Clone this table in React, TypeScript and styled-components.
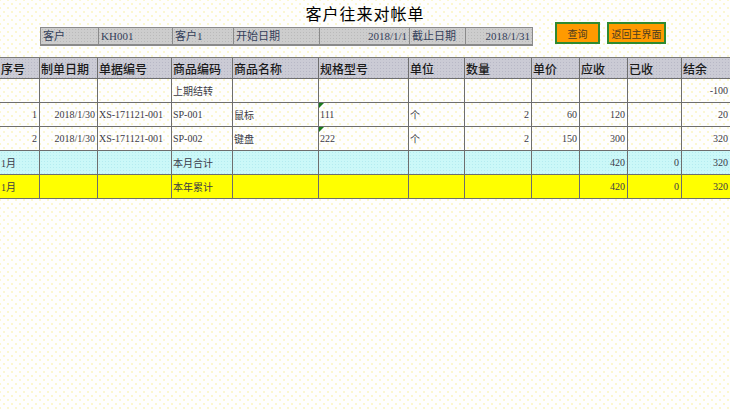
import React from "react";
import styled, { createGlobalStyle } from "styled-components";

const Global = createGlobalStyle`
  html, body { margin: 0; padding: 0; }
  body {
    width: 730px;
    height: 410px;
    overflow: hidden;
    background-color: #fefefe;
    background-image:
      radial-gradient(circle, #f7ec7e 0.45px, transparent 0.85px),
      radial-gradient(circle, #f7ec7e 0.45px, transparent 0.85px);
    background-size: 8px 8px;
    background-position: 0 0, 4px 4px;
    font-family: "Liberation Serif", "Noto Sans CJK SC", serif;
  }
`;

const COLS = "40px 58px 74px 61px 86px 90px 56px 67px 48px 48px 54px 48px";

const Page = styled.div`
  width: 730px;
  display: flex;
  flex-direction: column;
`;

const Title = styled.h1`
  margin: 0;
  height: 23px;
  padding-top: 3px;
  text-align: center;
  font-size: 16px;
  font-weight: 400;
  line-height: 20px;
  color: #000;
  letter-spacing: 1px;
  font-family: "Noto Sans CJK SC", sans-serif;
`;

const TopBar = styled.div`
  display: flex;
  align-items: flex-start;
  padding-left: 40px;
  height: 31px;
`;

const InfoGrid = styled.div`
  margin-top: 1px;
  display: grid;
  grid-template-columns: 58px 74px 61px 86px 90px 56px 67px;
  height: 19px;
  border-top: 1px solid #8a8a8a;
  border-bottom: 2px solid #8a8a8a;
  border-left: 1px solid #8a8a8a;
  box-sizing: border-box;
  background-color: #cdcdcd;
  background-image: radial-gradient(circle, #bababa 0.5px, transparent 0.9px);
  background-size: 3px 3px;
`;

const InfoCell = styled.div<{ $right?: boolean }>`
  border-right: 1px solid #8a8a8a;
  font-size: 11px;
  line-height: 16px;
  color: #34405a;
  padding: 0 2px;
  white-space: nowrap;
  overflow: hidden;
  text-align: ${(p) => (p.$right ? "right" : "left")};
  font-family: "Liberation Serif", "Noto Sans CJK SC", serif;
`;

const Buttons = styled.div`
  display: flex;
  gap: 7px;
  margin-left: 22px;
  margin-top: -4px;
`;

const Btn = styled.button<{ $w: number }>`
  width: ${(p) => p.$w}px;
  height: 22px;
  box-sizing: border-box;
  background: #ff9a00;
  border: 2px solid #2f8a2f;
  border-radius: 0;
  padding: 0;
  font-size: 10px;
  color: #4a3a20;
  font-family: "Noto Sans CJK SC", sans-serif;
  cursor: pointer;
`;

const Table = styled.div`
  display: grid;
  grid-template-columns: ${COLS};
  border-top: 1px solid #7a7a7a;
`;

type RowKind = "head" | "plain" | "month" | "year";

const rowBg: Record<RowKind, string> = {
  head: "#cbcbd5",
  plain: "transparent",
  month: "#cbf8f8",
  year: "#ffff00",
};

const Cell = styled.div<{ $kind: RowKind; $right?: boolean }>`
  position: relative;
  height: ${(p) => (p.$kind === "head" ? "20px" : "23px")};
  border-right: 1px solid #6e6e6e;
  border-bottom: 1px solid #6e6e6e;
  background-color: ${(p) => rowBg[p.$kind]};
  background-image: ${(p) =>
    p.$kind === "head"
      ? "radial-gradient(circle, #b8b8c6 0.5px, transparent 0.9px)"
      : p.$kind === "month"
      ? "radial-gradient(circle, #b4ecf0 0.5px, transparent 0.9px)"
      : "none"};
  background-size: 3px 3px;
  box-sizing: content-box;
  padding: 0 2px 0 1px;
  display: flex;
  align-items: center;
  justify-content: ${(p) => (p.$right ? "flex-end" : "flex-start")};
  font-size: ${(p) => (p.$kind === "head" ? "12px" : "10px")};
  font-weight: ${(p) => (p.$kind === "head" ? 500 : 400)};
  color: ${(p) => (p.$kind === "head" ? "#1a1a1a" : "#3a3a48")};
  white-space: nowrap;
  overflow: hidden;
  font-family: ${(p) =>
    p.$kind === "head"
      ? `"Noto Sans CJK SC", sans-serif`
      : `"Liberation Serif", "Noto Sans CJK SC", serif`};
  &:nth-child(12n) {
    border-right: none;
  }
`;

const Mark = styled.span`
  position: absolute;
  left: 0;
  top: 0;
  width: 0;
  height: 0;
  border-top: 5px solid #1b7a1b;
  border-right: 5px solid transparent;
`;

const headers = [
  "序号",
  "制单日期",
  "单据编号",
  "商品编码",
  "商品名称",
  "规格型号",
  "单位",
  "数量",
  "单价",
  "应收",
  "已收",
  "结余",
];

type C = { t: string; r?: boolean; m?: boolean };
const rows: { kind: RowKind; cells: C[] }[] = [
  {
    kind: "plain",
    cells: [
      { t: "" }, { t: "" }, { t: "" }, { t: "上期结转" }, { t: "" }, { t: "" },
      { t: "" }, { t: "" }, { t: "" }, { t: "" }, { t: "" }, { t: "-100", r: true },
    ],
  },
  {
    kind: "plain",
    cells: [
      { t: "1", r: true }, { t: "2018/1/30", r: true }, { t: "XS-171121-001" },
      { t: "SP-001" }, { t: "鼠标" }, { t: "111", m: true }, { t: "个" },
      { t: "2", r: true }, { t: "60", r: true }, { t: "120", r: true }, { t: "" },
      { t: "20", r: true },
    ],
  },
  {
    kind: "plain",
    cells: [
      { t: "2", r: true }, { t: "2018/1/30", r: true }, { t: "XS-171121-001" },
      { t: "SP-002" }, { t: "键盘" }, { t: "222", m: true }, { t: "个" },
      { t: "2", r: true }, { t: "150", r: true }, { t: "300", r: true }, { t: "" },
      { t: "320", r: true },
    ],
  },
  {
    kind: "month",
    cells: [
      { t: "1月" }, { t: "" }, { t: "" }, { t: "本月合计" }, { t: "" }, { t: "" },
      { t: "" }, { t: "" }, { t: "" }, { t: "420", r: true }, { t: "0", r: true },
      { t: "320", r: true },
    ],
  },
  {
    kind: "year",
    cells: [
      { t: "1月" }, { t: "" }, { t: "" }, { t: "本年累计" }, { t: "" }, { t: "" },
      { t: "" }, { t: "" }, { t: "" }, { t: "420", r: true }, { t: "0", r: true },
      { t: "320", r: true },
    ],
  },
];

export default function App() {
  return (
    <>
      <Global />
      <Page>
        <Title>客户往来对帐单</Title>
        <TopBar>
          <InfoGrid>
            <InfoCell>客户</InfoCell>
            <InfoCell>KH001</InfoCell>
            <InfoCell>客户1</InfoCell>
            <InfoCell>开始日期</InfoCell>
            <InfoCell $right>2018/1/1</InfoCell>
            <InfoCell>截止日期</InfoCell>
            <InfoCell $right>2018/1/31</InfoCell>
          </InfoGrid>
          <Buttons>
            <Btn $w={45}>查询</Btn>
            <Btn $w={59}>返回主界面</Btn>
          </Buttons>
        </TopBar>
        <Table>
          {headers.map((h) => (
            <Cell key={h} $kind="head">
              {h}
            </Cell>
          ))}
          {rows.map((row, i) =>
            row.cells.map((c, j) => (
              <Cell key={`${i}-${j}`} $kind={row.kind} $right={c.r}>
                {c.m && <Mark />}
                {c.t}
              </Cell>
            ))
          )}
        </Table>
      </Page>
    </>
  );
}
